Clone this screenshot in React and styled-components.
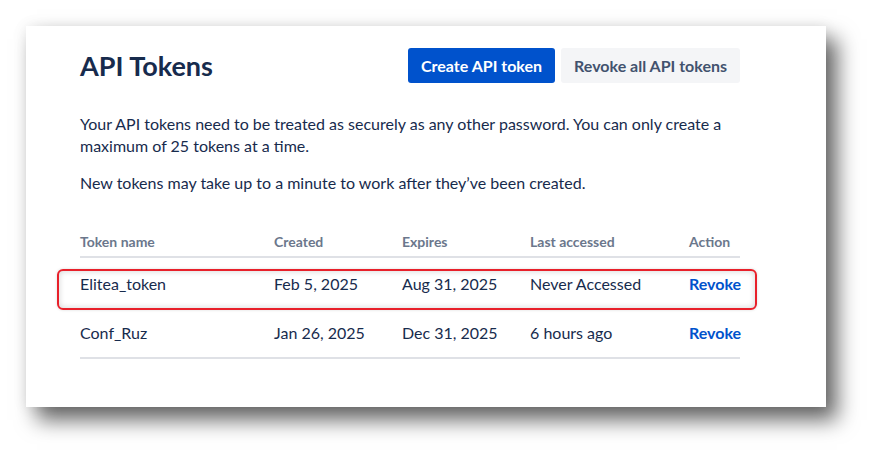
import React from 'react';
import styled, { createGlobalStyle } from 'styled-components';

const GlobalStyle = createGlobalStyle`
  html, body {
    margin: 0;
    padding: 0;
    background: #ffffff;
  }
  body {
    font-family: Lato, "Liberation Sans", sans-serif;
    color: #172b4d;
  }
`;

const Page = styled.div`
  width: 878px;
  height: 460px;
  padding: 26px 0 0 26px;
  box-sizing: border-box;
`;

const Card = styled.section`
  width: 800px;
  height: 381px;
  box-sizing: border-box;
  padding: 22px 86px 0 54px;
  background: #ffffff;
  box-shadow: 11px 13px 20px rgba(0, 0, 0, 0.6), 0 0 14px rgba(0, 0, 0, 0.08);
`;

const Header = styled.div`
  display: flex;
  align-items: center;
  justify-content: space-between;
  height: 35px;
`;

const Title = styled.h1`
  margin: 0;
  font-size: 27px;
  font-weight: 700;
  color: #172b4d;
`;

const Actions = styled.div`
  display: flex;
  gap: 6px;
`;

const Button = styled.button`
  height: 35px;
  padding: 0 13px;
  border: none;
  border-radius: 3px;
  font-family: inherit;
  font-size: 16px;
  font-weight: 700;
  cursor: pointer;
  background: ${p => (p.primary ? '#0052cc' : '#f4f5f7')};
  color: ${p => (p.primary ? '#ffffff' : '#42526e')};
`;

const Text = styled.p`
  margin: 0;
  font-size: 16px;
  line-height: 22px;
  & + & {
    margin-top: 15px;
  }
`;

const Intro = styled.div`
  margin-top: 30px;
`;

const Table = styled.div`
  margin-top: 35px;
  border-bottom: 2px solid #dfe1e6;
`;

const Row = styled.div`
  position: relative;
  display: grid;
  grid-template-columns: 194px 128px 128px 159px 1fr;
  align-items: center;
  height: ${p => (p.head ? '24px' : '49.5px')};
  ${p => p.head && 'border-bottom: 2px solid #dfe1e6; padding-bottom: 3px;'}
`;

const HeadCell = styled.div`
  font-size: 14px;
  font-weight: 700;
  color: #6b778c;
`;

const Cell = styled.div`
  font-size: 16px;
  color: #172b4d;
  padding-top: 1px;
`;

const RevokeLink = styled.a`
  font-size: 16px;
  font-weight: 700;
  color: #0052cc;
  text-decoration: none;
  cursor: pointer;
`;

const Highlight = styled.div`
  position: absolute;
  left: -23px;
  right: -17px;
  top: 11px;
  height: 41px;
  box-sizing: border-box;
  border: 2px solid #e8202a;
  border-radius: 6px;
  box-shadow: inset 0 0 6px rgba(0, 0, 0, 0.18), 0 0 3px rgba(0, 0, 0, 0.15);
  pointer-events: none;
`;

const tokens = [
  { name: 'Elitea_token', created: 'Feb 5, 2025', expires: 'Aug 31, 2025', last: 'Never Accessed', marked: true },
  { name: 'Conf_Ruz', created: 'Jan 26, 2025', expires: 'Dec 31, 2025', last: '6 hours ago' },
];

export default function App() {
  return (
    <Page>
      <GlobalStyle />
      <Card>
        <Header>
          <Title>API Tokens</Title>
          <Actions>
            <Button primary>Create API token</Button>
            <Button>Revoke all API tokens</Button>
          </Actions>
        </Header>
        <Intro>
          <Text>
            Your API tokens need to be treated as securely as any other password. You can only create a
            maximum of 25 tokens at a time.
          </Text>
          <Text>New tokens may take up to a minute to work after they’ve been created.</Text>
        </Intro>
        <Table>
          <Row head>
            <HeadCell>Token name</HeadCell>
            <HeadCell>Created</HeadCell>
            <HeadCell>Expires</HeadCell>
            <HeadCell>Last accessed</HeadCell>
            <HeadCell>Action</HeadCell>
          </Row>
          {tokens.map(t => (
            <Row key={t.name}>
              <Cell>{t.name}</Cell>
              <Cell>{t.created}</Cell>
              <Cell>{t.expires}</Cell>
              <Cell>{t.last}</Cell>
              <Cell>
                <RevokeLink>Revoke</RevokeLink>
              </Cell>
              {t.marked && <Highlight />}
            </Row>
          ))}
        </Table>
      </Card>
    </Page>
  );
}
